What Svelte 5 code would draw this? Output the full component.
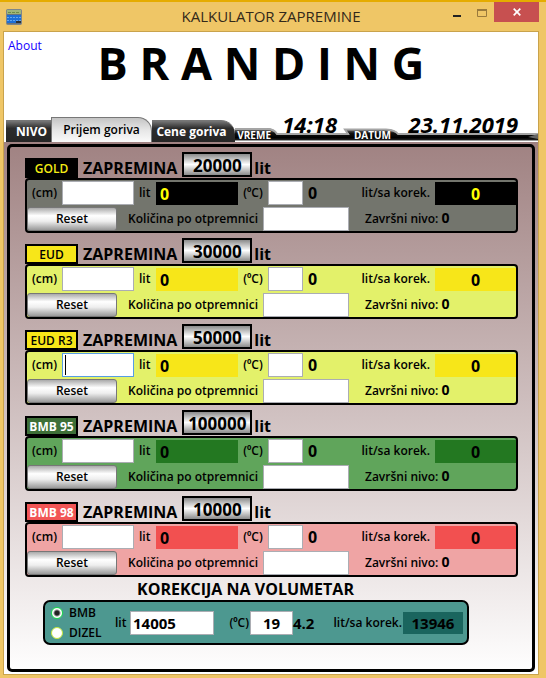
<script>
  let tanks = $state([
    { id: 'gold', name: 'GOLD', capacity: 20000, level: '', temp: '', note: '' },
    { id: 'eud', name: 'EUD', capacity: 30000, level: '', temp: '', note: '' },
    { id: 'eudr3', name: 'EUD R3', capacity: 50000, level: '', temp: '', note: '', active: true },
    { id: 'bmb95', name: 'BMB 95', capacity: 100000, level: '', temp: '', note: '' },
    { id: 'bmb98', name: 'BMB 98', capacity: 10000, level: '', temp: '', note: '' }
  ]);
  let fuel = $state('BMB');
  let liters = $state('14005');
  let degrees = $state('19');

  function reset(tank) {
    tank.level = '';
    tank.temp = '';
    tank.note = '';
  }
</script>

<div class="window">
  <header class="titlebar">
    <svg class="appicon" viewBox="0 0 16 16" aria-hidden="true">
      <rect x="0.5" y="0.5" width="15" height="15" rx="1" fill="#69737b" stroke="#7d868a" />
      <rect x="1" y="1" width="14" height="4" fill="#9fb578" />
      <path d="M2 3.500H14" stroke="#6e8a48" stroke-dasharray="3 1" />
      <rect x="1" y="6" width="14" height="8" fill="#1d6fd6" />
      <path d="M1 8.500H15M1 11.500H15" stroke="#63a5ee" stroke-dasharray="2 1" />
      <path d="M10 13H15" stroke="#2b3138" stroke-width="2" />
    </svg>
    <h1>KALKULATOR ZAPREMINE</h1>
    <div class="controls">
      <button class="min" aria-label="Minimize"><svg width="8" height="14" viewBox="0 0 8 14"><rect y="10" width="8" height="2" fill="#222" /></svg></button>
      <button class="max" aria-label="Maximize"><svg width="10" height="14" viewBox="0 0 10 14"><path d="M.5 4V11.500H9.500V4" fill="none" stroke="#9a7a3c" /><rect y="4" width="10" height="2" fill="#9a7a3c" /></svg></button>
      <button class="close" aria-label="Close"><svg width="8" height="8" viewBox="0 0 8 8"><path d="M.7 .7L7.300 7.300M7.300 .7L.7 7.300" stroke="#fff" stroke-width="1.700" /></svg></button>
    </div>
  </header>

  <main class="client">
    <div class="brand">
      <a href="#about">About</a>
      <div class="logo">B R A N D I N G</div>
    </div>

    <div class="strip">
      <nav class="tabs">
        <button class="tab first">NIVO</button>
        <button class="tab current">Prijem goriva</button>
        <button class="tab last">Cene goriva</button>
      </nav>
      <div class="status">
        <svg class="rail" viewBox="0 0 303 14" preserveAspectRatio="none" aria-hidden="true">
          <defs>
            <linearGradient id="rail" x1="0" y1="0" x2="0" y2="1">
              <stop offset="0" stop-color="#8a8a8a" />
              <stop offset="0.450" stop-color="#111" />
              <stop offset="0.800" stop-color="#000" />
              <stop offset="1" stop-color="#222" />
            </linearGradient>
          </defs>
          <path d="M0 0H32Q39 0 42 6H114L110 1H151Q160 1 163 6H303V12H0Z" fill="url(#rail)" />
          <path d="M0 1H32Q39 1 42 6H113L110 1.500H151Q160 2 163 6H303" fill="none" stroke="#a5a5a5" stroke-width="2" />
          <path d="M0 12.500H303" stroke="#9b9b9b" />
          <path d="M293 9L303 6V11Z" fill="#666" />
        </svg>
        <span class="tag">VREME</span>
        <time class="clock">14:18</time>
        <span class="tag">DATUM</span>
        <time class="clock">23.11.2019</time>
      </div>
    </div>

    <div class="backdrop">
      <div class="panel">
        {#each tanks as tank (tank.id)}
          <section class="tank {tank.id}">
            <div class="head">
              <span class="badge">{tank.name}</span>
              <span class="volume">ZAPREMINA</span>
              <output class="capacity">{tank.capacity}</output>
              <span class="volume">lit</span>
            </div>
            <div class="box">
              <div class="row measure">
                <label for="{tank.id}-cm">(cm)</label>
                <span class="field" class:active={tank.active}>
                  <input id="{tank.id}-cm" bind:value={tank.level} />
                </span>
                <span class="unit">lit</span>
                <output class="result">0</output>
                <label class="mid" for="{tank.id}-c">(⁰C)</label>
                <input id="{tank.id}-c" bind:value={tank.temp} />
                <output class="plain">0</output>
                <span class="korek">lit/sa korek.</span>
                <output class="result centered">0</output>
              </div>
              <div class="row delivery">
                <button class="reset" onclick={() => reset(tank)}>Reset</button>
                <label class="korek" for="{tank.id}-doc">Količina po otpremnici</label>
                <input id="{tank.id}-doc" bind:value={tank.note} />
                <span class="final">Završni nivo: <output>0</output></span>
              </div>
            </div>
          </section>
        {/each}

        <h2>KOREKCIJA NA VOLUMETAR</h2>
        <section class="correction">
          <div class="fuels">
            <label><input type="radio" name="fuel" value="BMB" bind:group={fuel} />BMB</label>
            <label class="diesel"><input type="radio" name="fuel" value="DIZEL" bind:group={fuel} />DIZEL</label>
          </div>
          <label for="liters">lit</label>
          <input id="liters" bind:value={liters} />
          <label class="degree" for="degrees">(⁰C)</label>
          <input id="degrees" bind:value={degrees} />
          <output class="factor">4.2</output>
          <span class="ratio">lit/sa korek.</span>
          <output class="total">13946</output>
        </section>
      </div>
    </div>
  </main>
</div>

<style>
  :global(body) {
    margin: 0;
    background: #efc666;
  }
  .window {
    box-sizing: border-box;
    min-height: 100vh;
    display: flex;
    flex-direction: column;
    padding: 0 7px 5px 3px;
    border-top: 2px solid #e5ac00;
    background: #efc666;
    font: 600 12px/16px "Open Sans", "Noto Sans", sans-serif;
    color: #000;
  }
  * {
    box-sizing: border-box;
  }
  button, input {
    font: inherit;
    color: inherit;
    margin: 0;
    padding: 0;
    border: 0;
    min-width: 0;
  }
  .titlebar {
    display: grid;
    grid-template-columns: 94px 1fr 94px;
    align-items: start;
    height: 29px;
  }
  .appicon {
    width: 16px;
    height: 16px;
    margin: 7px 0 0 3px;
  }
  h1 {
    margin: 4px 0 0;
    font-size: 15px;
    line-height: 20px;
    font-weight: 400;
    text-align: center;
    color: #33291a;
  }
  .controls {
    display: flex;
    justify-content: flex-end;
    width: 94px;
  }
  .controls button {
    display: grid;
    place-items: center;
    width: 27px;
    height: 20px;
    background: none;
  }
  .controls .close {
    width: 45px;
    flex: none;
    background: #c75050;
  }
  .client {
    flex: 1;
    display: flex;
    flex-direction: column;
    border: 1px solid #c9a34c;
    background: #fff;
  }
  .brand {
    display: grid;
    grid-template-columns: 40px 1fr 64px;
    height: 82px;
    padding-left: 4px;
  }
  .brand a {
    margin-top: 4px;
    font-size: 12px;
    line-height: 20px;
    font-weight: 400;
    text-decoration: none;
    color: #1400ff;
  }
  .logo {
    font-size: 45px;
    line-height: 62px;
    font-weight: 700;
    text-align: center;
    white-space: nowrap;
  }
  .strip {
    display: flex;
    align-items: flex-end;
    height: 28px;
    padding-left: 2px;
  }
  .tabs {
    display: flex;
    align-items: flex-end;
  }
  .tab {
    height: 22px;
    padding: 0 4px;
    font-weight: 700;
    white-space: nowrap;
    color: #fff;
    border-top: 1px solid #777;
    background: linear-gradient(#777, #2d2d2d 35%, #262626);
  }
  .tab.first {
    width: 45px;
    padding-left: 10px;
  }
  .tab.current {
    width: 101px;
    height: 25px;
    font-weight: 600;
    color: #000;
    border: 1px solid #777;
    border-bottom: 0;
    border-radius: 0 14px 0 0;
    background: linear-gradient(#c4c4c4, #e6e6e6 50%, #fafafa);
  }
  .tab.last {
    width: 83px;
    padding-right: 8px;
    border-radius: 0 14px 0 0;
  }
  .status {
    position: relative;
    flex: 1;
    display: grid;
    grid-template-columns: 36fr 66fr 54fr 127fr;
    align-items: end;
    height: 28px;
    padding: 0 20px 0 0;
  }
  .rail {
    position: absolute;
    left: 0;
    bottom: 0;
    width: 100%;
    height: 14px;
  }
  .tag {
    position: relative;
    font-size: 10px;
    line-height: 14px;
    font-weight: 700;
    color: #fff;
    text-align: right;
  }
  .clock {
    position: relative;
    align-self: start;
    font-size: 22px;
    line-height: 20px;
    font-weight: 700;
    font-style: italic;
    text-align: right;
    white-space: nowrap;
  }
  .backdrop {
    flex: 1;
    display: flex;
    padding: 2px 3px;
    background: linear-gradient(#a08282, #ddd2d2 65%, #fff);
  }
  .panel {
    flex: 1;
    padding: 5px 14px 24px 15px;
    border: 3px solid #000;
    border-radius: 5px;
  }
  .tank {
    --fill: #e3f16a;
    --result: #f7e619;
    --badge: #f7e619;
    --badge-ink: #000;
    --badge-weight: 600;
    --ink: #000;
    margin-bottom: 5px;
  }
  .gold {
    --fill: #73756d;
    --result: #000;
    --badge: #000;
    --badge-ink: #f3ec14;
    --ink: #ffff00;
  }
  .bmb95 {
    --fill: #60a55b;
    --result: #237821;
    --badge: #3d6f37;
    --badge-ink: #fff;
    --badge-weight: 700;
  }
  .bmb98 {
    --fill: #efa4a4;
    --result: #f25050;
    --badge: #f25555;
    --badge-ink: #fff;
    --badge-weight: 700;
  }
  .head {
    display: flex;
    align-items: flex-end;
    height: 26px;
  }
  .badge {
    width: 53px;
    height: 20px;
    margin-right: 5px;
    border: 2px solid #000;
    line-height: 17px;
    font-weight: var(--badge-weight);
    text-align: center;
    white-space: nowrap;
    background: var(--badge);
    color: var(--badge-ink);
  }
  .volume {
    font-size: 16px;
    line-height: 20px;
    font-weight: 700;
  }
  .capacity {
    width: 70px;
    height: 25px;
    margin: 0 2px 1px 5px;
    border: 2px solid #000;
    font-size: 17px;
    line-height: 23px;
    font-weight: 700;
    text-align: center;
    background: linear-gradient(#8b8b8b, #fff 50%, #8b8b8b);
  }
  .box {
    height: 55px;
    border: 2px solid #000;
    border-radius: 4px;
    background: var(--fill);
  }
  .row {
    display: grid;
    align-items: center;
  }
  .measure {
    grid-template-columns: 35px 72px 22px 82px 30px 35px 1fr 75px 81px;
    height: 26px;
  }
  .measure label:first-child,
  .unit,
  .plain {
    padding-left: 5px;
  }
  .delivery {
    grid-template-columns: 90px 146px 86px 1fr;
    height: 25px;
  }
  .row input,
  .correction > input {
    width: 100%;
    height: 24px;
    padding: 0 4px;
    border: 1px solid #abadb3;
    background: #fff;
    outline: 0;
  }
  .field {
    position: relative;
    display: grid;
  }
  .active input {
    border-color: #569de5;
  }
  .active::after {
    content: "";
    position: absolute;
    left: 3px;
    top: 2px;
    width: 1px;
    height: 20px;
    background: #000;
  }
  .result {
    height: 23px;
    padding-left: 4px;
    font-size: 16px;
    line-height: 24px;
    font-weight: 700;
    background: var(--result);
    color: var(--ink);
  }
  .centered {
    padding: 0;
    text-align: center;
  }
  .plain {
    font-size: 16px;
    font-weight: 700;
  }
  .mid {
    text-align: center;
  }
  .korek {
    padding-right: 5px;
    text-align: right;
    white-space: nowrap;
  }
  .reset {
    height: 24px;
    border: 1px solid #777;
    border-radius: 3px;
    background: linear-gradient(#aaa, #fff 35%, #eee 60%, #999);
  }
  .final {
    padding-left: 16px;
  }
  .final output {
    font-size: 14px;
    font-weight: 700;
  }
  h2 {
    margin: -2px 52px 2px 0;
    font-size: 16px;
    line-height: 18px;
    font-weight: 700;
    text-align: center;
  }
  .correction {
    display: grid;
    grid-template-columns: 70px 15px 84px 36px 43px 1fr 75px 60px;
    align-items: center;
    height: 45px;
    margin: 0 49px 0 18px;
    padding: 0 4px 0 0;
    border: 2px solid #000;
    border-radius: 7px;
    background: #4d9890;
  }
  .fuels {
    display: grid;
    row-gap: 4px;
    padding-left: 6px;
  }
  .fuels label {
    display: flex;
    align-items: center;
    gap: 6px;
  }
  .fuels input {
    appearance: none;
    width: 12px;
    height: 12px;
    border: 1px solid #19e04a;
    border-radius: 50%;
    background: #fff;
  }
  .fuels .diesel input {
    border-color: #c5e83c;
  }
  .fuels input:checked {
    background: radial-gradient(circle, #222 0 2px, #fff 4px);
  }
  .correction > input {
    font-size: 15px;
    font-weight: 700;
    padding: 0 2px;
  }
  .correction > #degrees {
    text-align: center;
  }
  .degree,
  .ratio {
    padding-right: 1px;
    text-align: right;
    white-space: nowrap;
  }
  .factor,
  .total {
    font-size: 15px;
    font-weight: 700;
  }
  .total {
    height: 22px;
    line-height: 22px;
    text-align: center;
    background: #1a655e;
  }
</style>
